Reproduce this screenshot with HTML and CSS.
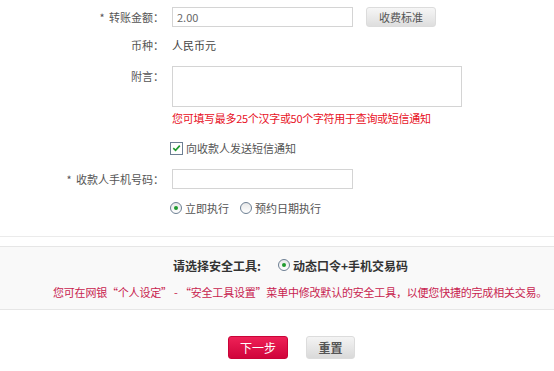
FILE: index.html
```html
<!DOCTYPE html>
<html lang="zh-CN">
<head>
    <meta charset="UTF-8">
    <title>转账</title>
    <link rel="stylesheet" href="styles.css">
</head>
<body>
    <form class="transfer-form">
        <div class="form-row row-amount">
            <label class="form-label"><span class="star">*</span> 转账金额：</label>
            <div class="form-field">
                <input type="text" class="text-input" value="2.00">
                <button type="button" class="btn-fee">收费标准</button>
            </div>
        </div>
        <div class="form-row row-currency">
            <label class="form-label">币种：</label>
            <div class="form-field value">人民币元</div>
        </div>
        <div class="form-row row-note">
            <label class="form-label">附言：</label>
            <div class="form-field">
                <textarea class="note-input"></textarea>
            </div>
        </div>
        <div class="form-row row-tip">
            <div class="form-label"></div>
            <div class="form-field tip">您可填写最多25个汉字或50个字符用于查询或短信通知</div>
        </div>
        <div class="form-row row-sms">
            <div class="form-label"></div>
            <div class="form-field">
                <span class="check-box">
                    <svg width="12" height="12" viewBox="0 0 12 12"><path d="M2.5 6.2 L5 8.6 L9.6 3.4" fill="none" stroke="#1f9a2e" stroke-width="1.8"/></svg>
                </span>
                <span class="option-text">向收款人发送短信通知</span>
            </div>
        </div>
        <div class="form-row row-phone">
            <label class="form-label"><span class="star">*</span> 收款人手机号码：</label>
            <div class="form-field">
                <input type="text" class="text-input">
            </div>
        </div>
        <div class="form-row row-when">
            <div class="form-label"></div>
            <div class="form-field">
                <span class="radio on"></span>
                <span class="option-text">立即执行</span>
                <span class="radio second"></span>
                <span class="option-text">预约日期执行</span>
            </div>
        </div>

        <div class="divider"></div>

        <div class="security">
            <div class="security-choice">
                <span class="security-title">请选择安全工具:</span>
                <span class="radio on"></span>
                <span class="security-name">动态口令+手机交易码</span>
            </div>
            <p class="security-tip">您可在网银“个人设定” - “安全工具设置”菜单中修改默认的安全工具，以便您快捷的完成相关交易。</p>
        </div>

        <div class="actions">
            <button type="button" class="btn-next">下一步</button>
            <button type="reset" class="btn-reset">重置</button>
        </div>
    </form>
</body>
</html>
```

FILE: styles.css
```css
* {
    margin: 0;
    padding: 0;
    box-sizing: border-box;
}

body {
    font-family: "Noto Sans CJK SC", "Noto Sans", sans-serif;
    font-size: 11px;
    color: #555;
    background: #fff;
    width: 554px;
}

.form-row {
    display: flex;
    align-items: center;
}

.form-label {
    width: 164px;
    text-align: right;
    color: #555;
    flex-shrink: 0;
}

.form-label .star {
    margin-right: 2px;
}

.form-field {
    margin-left: 8px;
    display: flex;
    align-items: center;
}

.row-amount {
    margin-top: 7px;
    height: 20px;
}

.row-currency {
    margin-top: 8px;
    height: 20px;
}

.row-currency .value {
    color: #444;
}

.row-note {
    margin-top: 11px;
    align-items: flex-start;
}

.row-note .form-label {
    padding-top: 2px;
}

.row-tip {
    margin-top: 3px;
    height: 16px;
}

.tip {
    color: #e8101e;
    letter-spacing: -0.3px;
}

.row-sms {
    margin-top: 14px;
    height: 16px;
}

.row-phone {
    margin-top: 13px;
    height: 20px;
}

.row-when {
    margin-top: 11px;
    height: 16px;
}

.text-input {
    width: 181px;
    height: 20px;
    border: 1px solid #d4d4d4;
    padding: 0 4px;
    font-family: inherit;
    font-size: 11px;
    color: #666;
    outline: none;
}

.note-input {
    width: 290px;
    height: 41px;
    border: 1px solid #d4d4d4;
    resize: none;
    outline: none;
    display: block;
}

.btn-fee {
    margin-left: 13px;
    width: 70px;
    height: 20px;
    border: 1px solid #dcdcdc;
    border-radius: 3px;
    background: linear-gradient(#f6f6f6, #dedede);
    font-family: inherit;
    font-size: 11px;
    color: #555;
}

.check-box {
    width: 13px;
    height: 13px;
    border: 1px solid #6d7f93;
    margin-left: -2px;
    display: flex;
    align-items: center;
    justify-content: center;
    background: #fff;
}

.check-box svg {
    display: block;
}

.option-text {
    margin-left: 3px;
    color: #555;
}

.radio {
    width: 12px;
    height: 12px;
    border: 1px solid #6d7f93;
    border-radius: 50%;
    background: linear-gradient(#e8e8e8, #fff);
    position: relative;
    margin-left: -2px;
}

.radio.on::after {
    content: "";
    position: absolute;
    left: 3px;
    top: 3px;
    width: 4px;
    height: 4px;
    border-radius: 50%;
    background: #1f9a2e;
}

.radio.second {
    margin-left: 11px;
}

.divider {
    margin-top: 20px;
    border-top: 1px solid #ebebeb;
}

.security {
    margin-top: 9px;
    background: #f9f9f9;
    border-top: 1px solid #e6e6e6;
    border-bottom: 1px solid #e6e6e6;
    padding: 10px 0 9px;
}

.security-choice {
    display: flex;
    align-items: center;
    height: 16px;
    padding-left: 173px;
}

.security-title {
    font-size: 12px;
    font-weight: bold;
    color: #333;
    margin-right: 17px;
}

.security-choice .radio {
    margin-left: 0;
}

.security-name {
    font-size: 12px;
    font-weight: bold;
    color: #333;
    margin-left: 3px;
}

.security-tip {
    margin-top: 11px;
    line-height: 16px;
    color: #c8234f;
    padding-left: 53px;
    letter-spacing: -0.2px;
    white-space: nowrap;
}

.actions {
    margin-top: 26px;
    display: flex;
    padding-left: 228px;
}

.actions button {
    height: 23px;
    border-radius: 3px;
    font-family: inherit;
    font-size: 12px;
}

.btn-next {
    width: 60px;
    border: 1px solid #c90438;
    background: linear-gradient(#ee2157, #d0043b);
    color: #fff;
}

.btn-reset {
    margin-left: 18px;
    width: 49px;
    border: 1px solid #dcdcdc;
    background: linear-gradient(#f4f4f4, #d9d9d9);
    color: #555;
    font-weight: bold;
}
```
